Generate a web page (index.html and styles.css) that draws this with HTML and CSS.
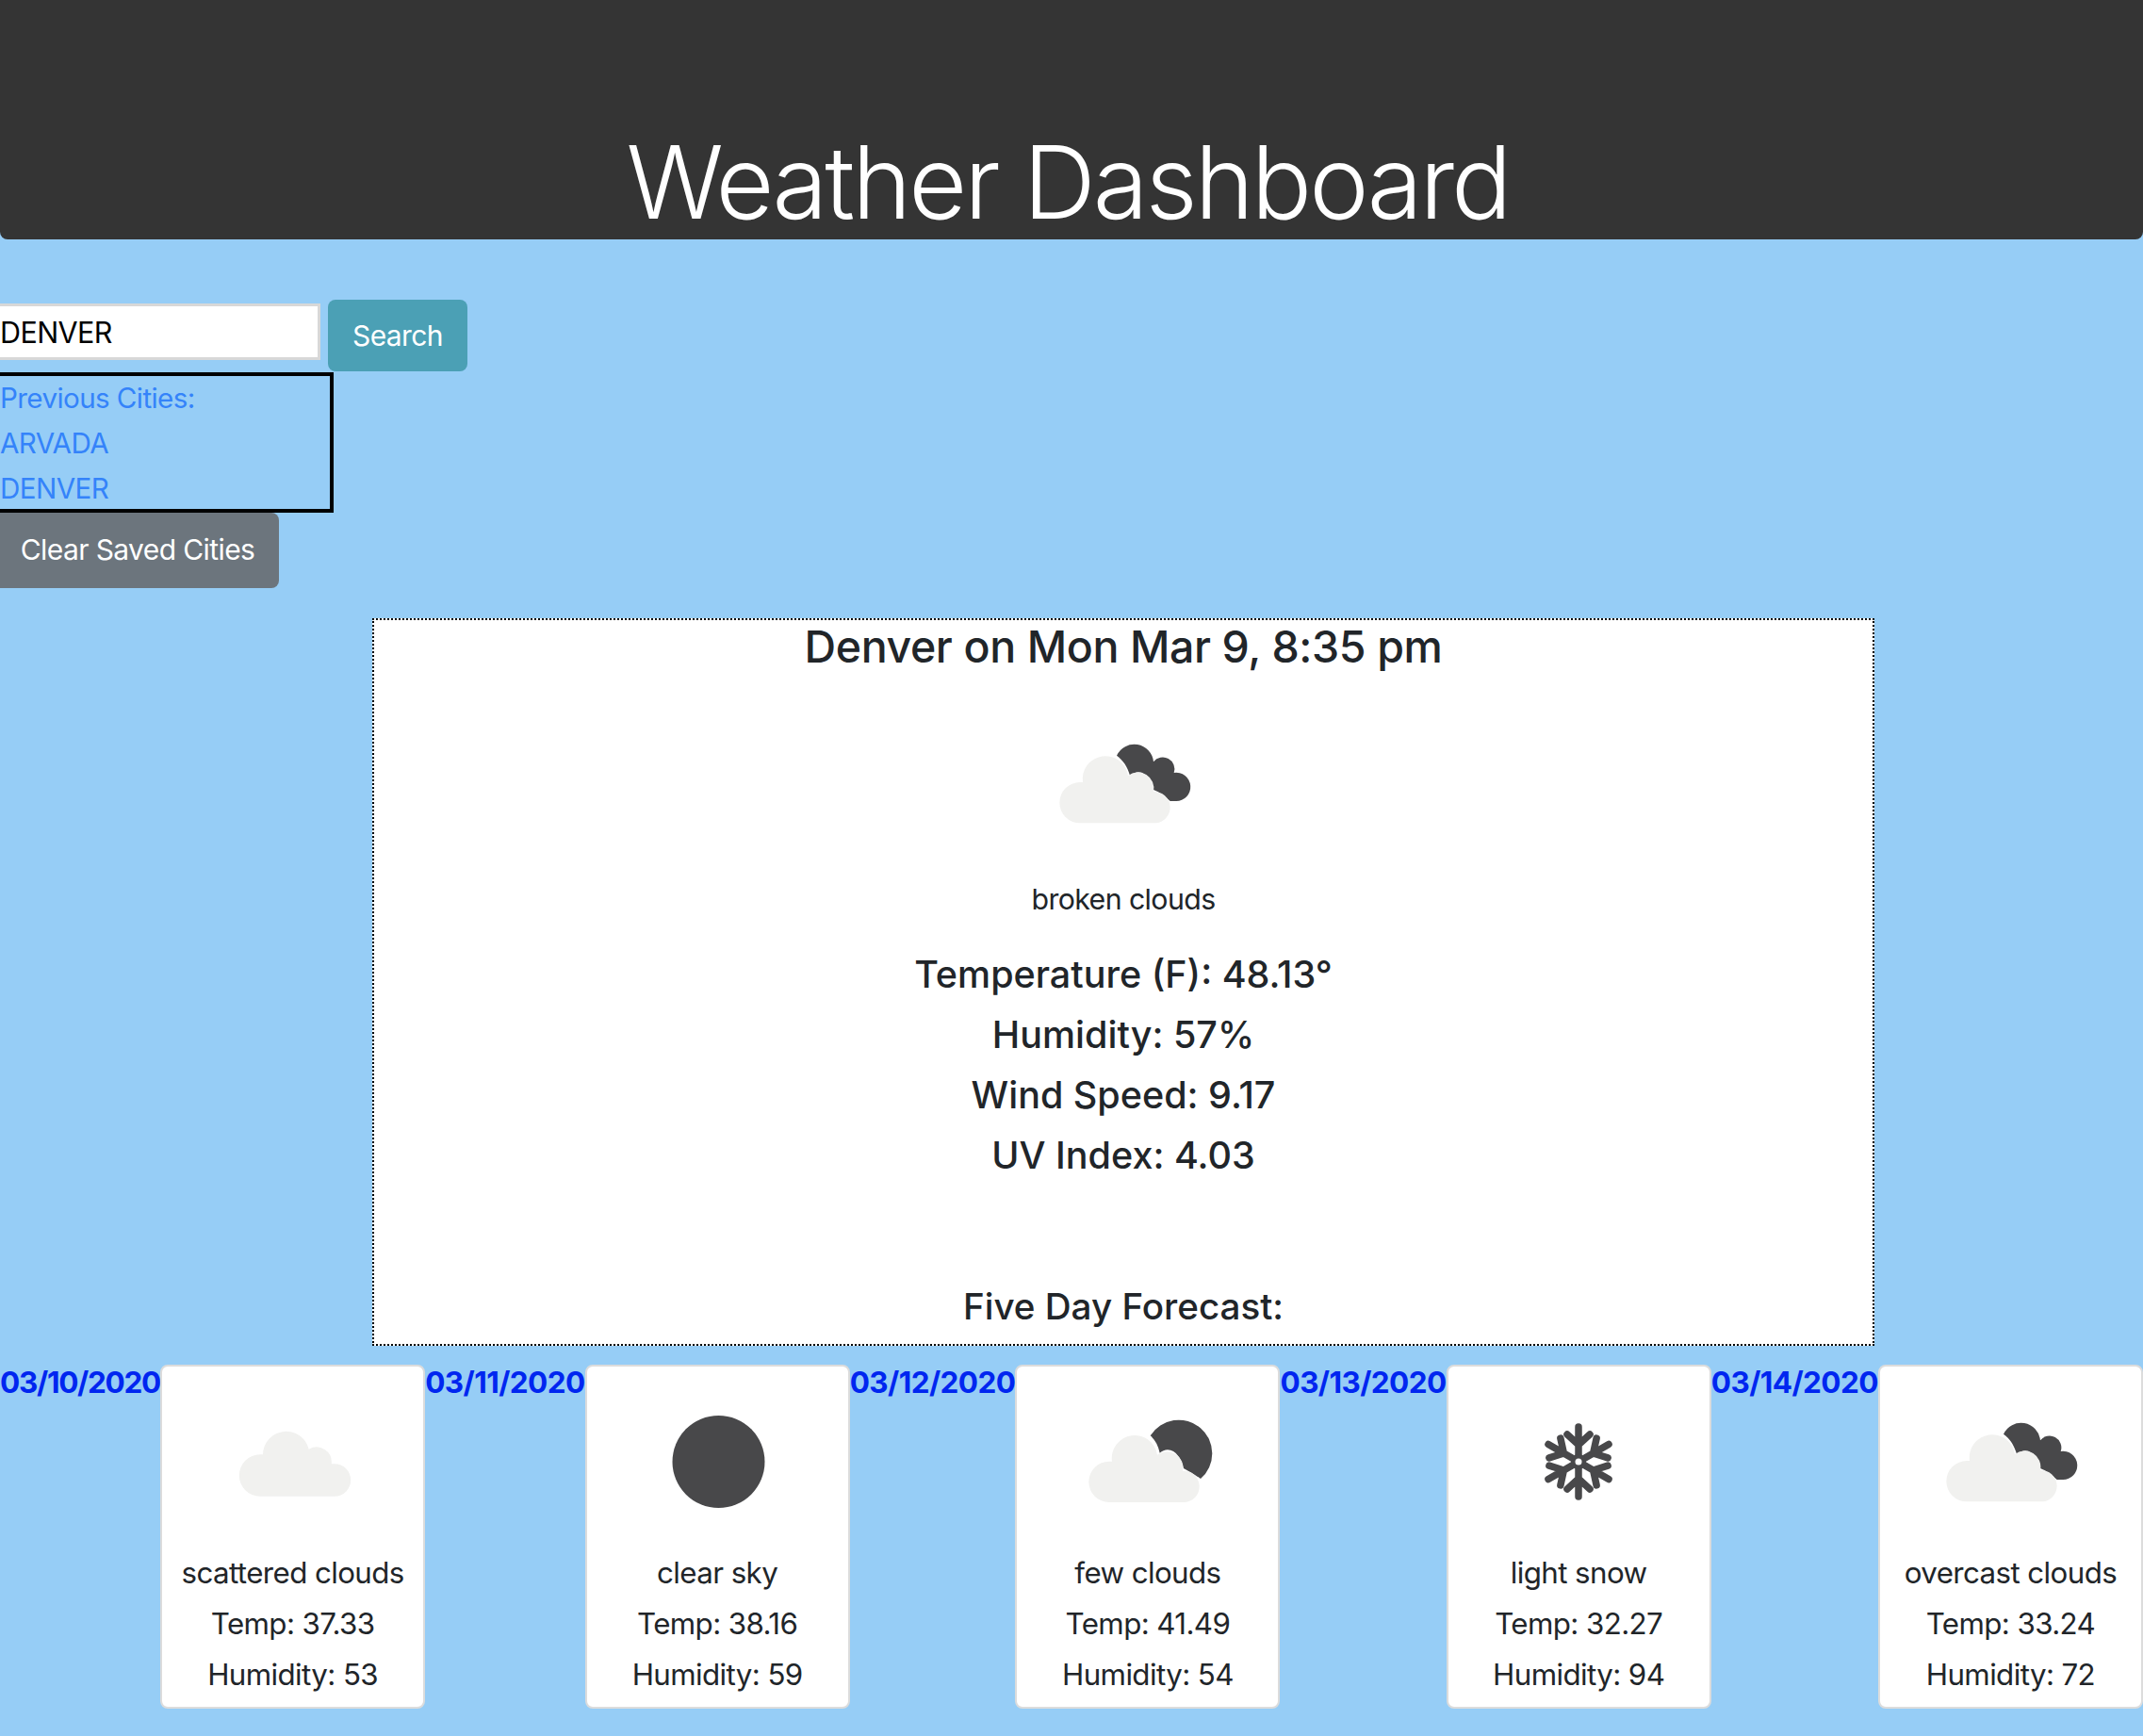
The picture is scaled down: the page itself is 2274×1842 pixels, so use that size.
FILE: index.html
```html
<!DOCTYPE html>
<html lang="en">
<head>
<meta charset="utf-8">
<title>Weather Dashboard</title>
<link rel="stylesheet" href="styles.css">
</head>
<body>
<header class="hero"><h1 class="title">Weather Dashboard</h1></header>
<section class="side">
  <div class="search">
    <input class="input" type="text" value="DENVER">
    <button class="btn btn-search">Search</button>
  </div>
  <ul class="history">
    <li>Previous Cities:</li>
    <li>ARVADA</li>
    <li>DENVER</li>
  </ul>
  <button class="btn btn-clear">Clear Saved Cities</button>
</section>
<main class="today">
  <h2 class="city">Denver on Mon Mar 9, 8:35 pm</h2>
  <svg class="icon-main" viewBox="0 0 180 110">
    <path class="dark" d="M83 21.7A20.5 20.5 0 0 1 122 28.3A12.5 12.5 0 0 1 143.7 40A15.1 15.1 0 1 1 146 70H139.7C134 65 128 60 122 58C120 47 113 39 106 39.3C103 39.3 100 40.5 97 42.7C94 33 90 27 83 21.7Z"/>
    <path class="light" d="M44 93.3A21.6 21.6 0 0 1 44 50H47A24 24 0 0 1 95 43A17 17 0 0 1 122 60A16.6 16.6 0 0 1 124 93.3Z"/>
  </svg>
  <p class="desc">broken clouds</p>
  <p class="stat">Temperature (F): 48.13°</p>
  <p class="stat">Humidity: 57%</p>
  <p class="stat">Wind Speed: 9.17</p>
  <p class="stat">UV Index: 4.03</p>
  <h3 class="five">Five Day Forecast:</h3>
</main>
<section class="forecast">
  <span class="date date-first">03/10/2020</span>
  <article class="card">
    <svg class="icon" viewBox="0 0 180 110">
      <path class="light" d="M55 87.7A22.2 22.2 0 0 1 55 43.3H58A24.7 24.7 0 0 1 106.7 37.7A16 16 0 0 1 130.7 53.3H134A17.2 17.2 0 0 1 134 87.7Z"/>
    </svg>
    <p>scattered clouds</p><p>Temp: 37.33</p><p>Humidity: 53</p>
  </article>
  <span class="date">03/11/2020</span>
  <article class="card">
    <svg class="icon" viewBox="0 0 180 110"><circle class="dark" cx="91.5" cy="51" r="49"/></svg>
    <p>clear sky</p><p>Temp: 38.16</p><p>Humidity: 59</p>
  </article>
  <span class="date">03/12/2020</span>
  <article class="card">
    <svg class="icon" viewBox="0 0 180 110">
      <path class="dark" d="M92.7 23.3A35.5 35.5 0 1 1 146 69C140 65 134 61 128 58C126 49 120 38.3 111 38.3C108 38.3 105 39.7 102.7 41.7C101 34 98 28 92.7 23.3Z"/>
      <path class="light" d="M49 94A21.6 21.6 0 0 1 49 50.7H52A24 24 0 0 1 100 43.7A17 17 0 0 1 127 60.7A16.6 16.6 0 0 1 129 94Z"/>
    </svg>
    <p>few clouds</p><p>Temp: 41.49</p><p>Humidity: 54</p>
  </article>
  <span class="date">03/13/2020</span>
  <article class="card">
    <svg class="icon" viewBox="0 0 180 110">
      <g class="flake">
        <g id="arm"><path d="M90 47V14M78 22L90 33L102 22"/></g>
        <use href="#arm" transform="rotate(60 90 51)"/>
        <use href="#arm" transform="rotate(120 90 51)"/>
        <use href="#arm" transform="rotate(180 90 51)"/>
        <use href="#arm" transform="rotate(240 90 51)"/>
        <use href="#arm" transform="rotate(300 90 51)"/>
      </g>
      <circle class="dark" cx="90" cy="51" r="8"/>
      <circle class="white" cx="90" cy="51" r="3.5"/>
    </svg>
    <p>light snow</p><p>Temp: 32.27</p><p>Humidity: 94</p>
  </article>
  <span class="date">03/14/2020</span>
  <article class="card">
    <svg class="icon" viewBox="0 0 180 110">
      <path class="dark" d="M83 21.7A20.5 20.5 0 0 1 122 28.3A12.5 12.5 0 0 1 143.7 40A15.1 15.1 0 1 1 146 70H139.7C134 65 128 60 122 58C120 47 113 39 106 39.3C103 39.3 100 40.5 97 42.7C94 33 90 27 83 21.7Z"/>
      <path class="light" d="M44 93.3A21.6 21.6 0 0 1 44 50H47A24 24 0 0 1 95 43A17 17 0 0 1 122 60A16.6 16.6 0 0 1 124 93.3Z"/>
    </svg>
    <p>overcast clouds</p><p>Temp: 33.24</p><p>Humidity: 72</p>
  </article>
</section>
</body>
</html>
```
FILE: styles.css
```css
* { box-sizing: border-box; }
html, body { margin: 0; padding: 0; }
body {
  height: 1842px;
  overflow: hidden;
  background: #96cdf6;
  color: #212529;
  font-family: Inter, "Liberation Sans", sans-serif;
  font-size: 29.6px;
  letter-spacing: -0.6px;
}
p { margin: 0; }
.hero {
  height: 254px;
  background: #343434;
  border-radius: 0 0 8px 8px;
  display: flex;
  align-items: flex-end;
  justify-content: center;
}
.title {
  margin: 0 8px 1px 0;
  color: #fff;
  font-size: 107px;
  font-weight: 300;
  line-height: 120px;
  letter-spacing: -3px;
}
.side { padding-top: 64px; height: 402px; }
.search { display: flex; align-items: flex-start; gap: 8px; height: 76px; }
.input {
  width: 340px;
  height: 60px;
  margin-top: 4px;
  padding: 0;
  border: 3px solid #d8d8d8;
  border-left: 0;
  background: #fff;
  color: #000;
  font: inherit;
  font-size: 30.5px;
  letter-spacing: -0.6px;
}
.input:focus { outline: none; }
.btn {
  border: 0;
  border-radius: 8px;
  color: #fff;
  font: inherit;
  letter-spacing: -0.6px;
}
.btn-search { width: 148px; height: 76px; background: #4ba0b5; font-size: 30px; }
.btn-clear {
  display: block;
  width: 296px;
  height: 80px;
  padding: 0 4px 2px 0;
  background: #6c757d;
  border-radius: 0 8px 8px 0;
  font-size: 30px;
}
.history {
  list-style: none;
  width: 354px;
  height: 149px;
  margin: 1px 0 0;
  padding: 0;
  border: 4px solid #000;
  border-left: 0;
  color: #3483fa;
  line-height: 48px;
}
.history li:first-child { margin-top: -1px; }
.today {
  width: 1594px;
  height: 772px;
  margin-left: 395px;
  background: #fff;
  border: 2px dotted #000;
  text-align: center;
}
.city { margin: 0; font-size: 46.5px; font-weight: 500; line-height: 56px; letter-spacing: -0.4px; }
.icon-main { display: block; width: 180px; height: 110px; margin: 66px auto 0; }
.desc { margin-top: 40px; font-size: 30.3px; line-height: 48px; }
.stat { font-size: 39.5px; font-weight: 500; line-height: 64px; letter-spacing: 0; }
.desc + .stat { margin-top: 24px; }
.five { margin: 104px 0 0; font-size: 38.6px; font-weight: 500; line-height: 48px; letter-spacing: 0; }
.forecast { display: flex; margin-top: 20px; }
.date { color: #0026f0; font-weight: 700; font-size: 31.5px; line-height: 38px; }
.date-first { letter-spacing: -1.3px; }
.card {
  flex: 1;
  min-width: 0;
  height: 365px;
  background: #fff;
  border: 2px solid #dcdcdc;
  border-radius: 8px;
  text-align: center;
  font-size: 31.3px;
  line-height: 54px;
}
.icon { display: block; width: 180px; height: 110px; margin: 50px auto 32px; }
.light { fill: #f1f1ef; }
.dark { fill: #48484a; }
.white { fill: #fff; }
.flake { fill: none; stroke: #48484a; stroke-width: 7.5; stroke-linecap: round; stroke-linejoin: round; }
```
